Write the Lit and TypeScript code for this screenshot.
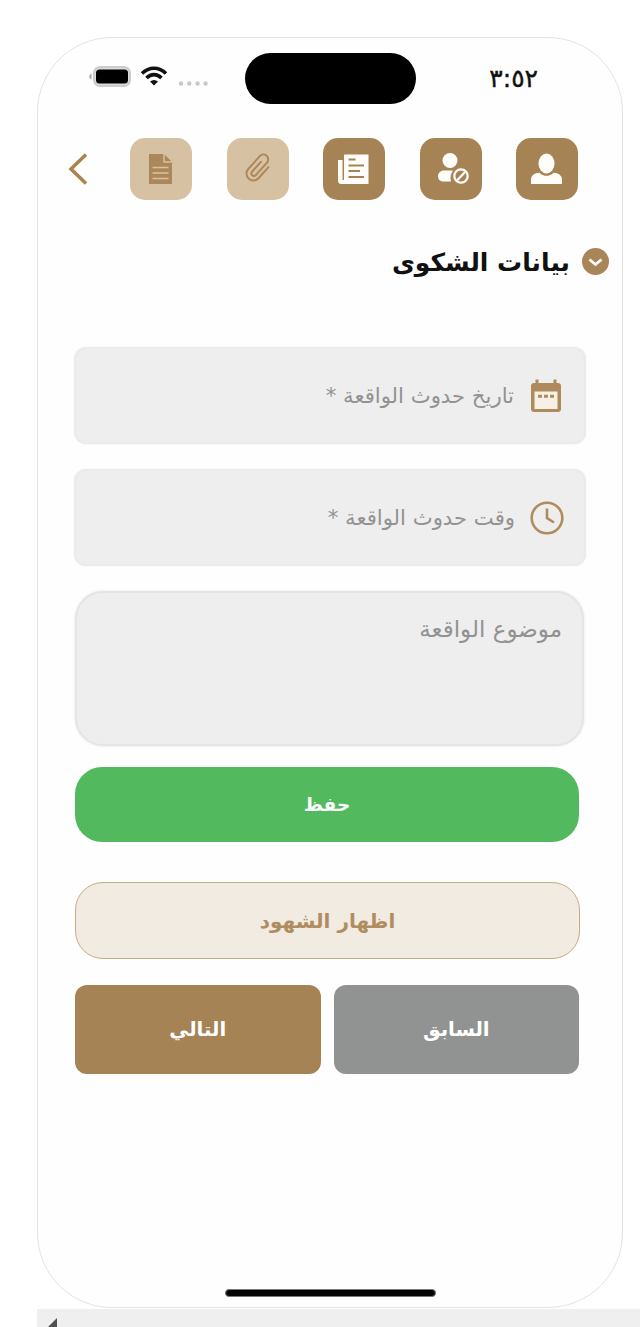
import { LitElement, html, css, svg } from "lit";
import { customElement } from "lit/decorators.js";

const person = svg`<ellipse cx="30.5" cy="25.5" rx="8" ry="10"/><path d="M15 46v-4.500c0-3.500 3-6 6.500-6.500l2-.3c4 4.200 10 4.200 14 0l2 .3c3.500.5 6.500 3 6.500 6.500V46z"/>`;

const blocked = svg`<circle cx="30" cy="22.500" r="7.500"/><path d="M31 43.500H23c-3 0-5-2.500-5-5 0-3.500 2.500-6 6-6h9c-2.500 3.500-3 7-2 11z"/><g fill="none" stroke="currentColor" stroke-width="2.300"><circle cx="41" cy="38" r="6.700"/><path d="m37 42.500 8.500-9"/></g>`;

const news = svg`<path d="M21.500 16.500h24V46H18.500a3.500 3.500 0 0 1-3.500-3.500V22h4.500v20h1.500V17.500z"/><g stroke="#a68355" stroke-width="1.800" fill="none"><path d="M25.500 21.500h7M25.500 27.500H41M25.500 33H37M25.500 39H41"/></g>`;

const clip = svg`<path transform="translate(31 30.500) rotate(42) scale(1.150)" fill="none" stroke="currentColor" stroke-width="1.700" stroke-linecap="round" d="M6-7V6A6 6 0 0 1-6 6V-9A4.200 4.200 0 0 1 2.400-9V5.500A2.200 2.200 0 0 1-2 5.500V-6"/>`;

const doc = svg`<path d="M19 16h15l8 8v22H19z"/><path d="M34 16v8h8" fill="none" stroke="#d6c1a3" stroke-width="1.500"/><path d="M22.500 29.500h16M22.500 35h16M22.500 40.500h16" stroke="#d6c1a3" stroke-width="1.300"/>`;

@customElement("app-root")
export class AppRoot extends LitElement {
  static styles = css`
    :host { display: block; width: 640px; height: 1327px; overflow: hidden; background: #fff;
      font-family: "DejaVu Sans", "Noto Sans", sans-serif; }
    * { box-sizing: border-box; }
    svg { display: block; flex: none; }
    .page { padding: 37px 0 0 37px; }
    .phone { width: 586px; height: 1271px; border: 1.500px solid #e3e3e3; border-radius: 75px;
      background: #fefefe; display: flex; flex-direction: column; }
    .status { height: 51px; margin: 15px 84px 0 51px; display: flex; align-items: center; }
    .signals { display: flex; align-items: center; width: 120px; margin-top: -3px; }
    .island { width: 171px; height: 51px; border-radius: 26px; background: #000; margin-left: 36px; }
    .time { margin-left: auto; font-size: 25px; line-height: 30px; direction: ltr; unicode-bidi: bidi-override; color: #111; -webkit-text-stroke: .4px #111; }
    .tabs { display: flex; align-items: center; margin: 34px 44px 0 29px; height: 62px; }
    .back { margin-right: 41px; }
    .tiles { display: flex; flex: 1; justify-content: space-between; }
    .tile { width: 62px; height: 62px; border-radius: 15px; background: #a68355; color: #fffdf9; }
    .tile.off { background: #d6c1a3; color: #ac875a; }
    .tile svg { fill: currentColor; }
    .heading { direction: rtl; display: flex; align-items: center; gap: 12px; height: 44px; margin: 39px 13px 0 0; }
    .heading h1 { margin: 0; padding-top: 4px; font-size: 25px; line-height: 44px; font-weight: 700; color: #111; white-space: nowrap; }
    .form { margin: 64px 36px 0 36px; display: flex; flex-direction: column; }
    .field { direction: rtl; height: 97px; border-radius: 12px; border: 2px solid #ebebeb; background: #eee; display: flex;
      align-items: center; padding: 0 22px; gap: 16px; color: #929292; font-size: 21.200px; box-shadow: 0 0 2px #eee; white-space: nowrap; }
    .field + .field { margin-top: 25px; }
    .clock { padding: 0 20px; gap: 15px; }
    .area { direction: rtl; height: 155px; margin: 25px 2px 0 1px; border-radius: 28px; border: 2px solid #e5e5e5; background: #eee;
      padding: 19px 20px 0 0; color: #929292; font-size: 23px; line-height: 34px; box-shadow: 0 0 3px #e5e5e5; }
    .btn { font-family: inherit; border: 0; padding: 0; display: flex; align-items: center; justify-content: center;
      direction: rtl; font-weight: 700; color: #fff; font-size: 19.700px; white-space: nowrap; }
    .save { height: 75px; margin: 21px 7px 0 1px; border-radius: 27px; background: #53b95e; font-size: 18.500px; }
    .show { height: 77px; margin: 40px 6px 0 1px; border-radius: 28px; border: 1.500px solid #c3ad7e; background: #f1ebe2; color: #b08d60; font-size: 20px; }
    .pair { display: flex; gap: 13px; margin: 26px 7px 0 1px; height: 89px; }
    .pair .btn { flex: 1; border-radius: 12px; }
    .next { background: #a68355; }
    .prev { background: #909391; }
    .home { width: 211px; height: 8px; border-radius: 4px; background: #050505; margin: auto auto 10px 187px; border: 1px solid #777; }
    .scroll { height: 19px; margin-top: 1px; background: #efefef; padding: 9px 0 0 11px; }
  `;

  private tile(icon: unknown, off = false) {
    return html`<div class="tile ${off ? "off" : ""}"><svg width="62" height="62" viewBox="0 0 62 62">${icon}</svg></div>`;
  }

  render() {
    return html`
      <div class="page">
        <div class="phone">
          <div class="status">
            <div class="signals">
              <svg width="120" height="30" viewBox="0 0 120 30">
                <rect x="5" y="5" width="36" height="19" rx="6" fill="#ddd" stroke="#ccc" stroke-width="2"/>
                <rect x="7" y="7.500" width="32" height="14" rx="3.500"/>
                <path d="M2.500 11.500v6c-3-1-3-5 0-6z" fill="#aaa"/>
                <g fill="none" stroke="#111" stroke-width="3.600"><path d="M53 11.500c7-7 17-7 24 0M57.500 16c4.500-4.500 10.500-4.500 15 0"/></g>
                <path d="M61 19.500c2.500-2 5.500-2 8 0L65 23.500z" fill="#111"/>
                <g fill="#c8c8c8"><circle cx="92" cy="21.500" r="2.200"/><circle cx="100.300" cy="21.500" r="2.200"/><circle cx="108.500" cy="21.500" r="2.200"/><circle cx="116.500" cy="21.500" r="2.200"/></g>
              </svg>
            </div>
            <div class="island"></div>
            <span class="time">٣:٥٢</span>
          </div>
          <div class="tabs">
            <svg class="back" width="22" height="36" viewBox="0 0 22 36"><path d="M19 3.500 4 18l15 14.500" fill="none" stroke="#aa834d" stroke-width="3.500"/></svg>
            <div class="tiles">
              ${this.tile(doc, true)}${this.tile(clip, true)}${this.tile(news)}${this.tile(blocked)}${this.tile(person)}
            </div>
          </div>
          <div class="heading">
            <svg width="27" height="27" viewBox="0 0 27 27"><circle cx="13.500" cy="13.500" r="13.500" fill="#aa8558"/><path d="m7.500 11.500 6 5 6-5" fill="none" stroke="#fff" stroke-width="2.800"/></svg>
            <h1>بيانات الشكوى</h1>
          </div>
          <div class="form">
            <div class="field">
              <svg width="32" height="36" viewBox="0 0 32 36"><path d="M4 5h24a3 3 0 0 1 3 3v23a3 3 0 0 1-3 3H4a3 3 0 0 1-3-3V8a3 3 0 0 1 3-3z" fill="#ae8a5d"/><path d="M7 1.500V7M25 1.500V7" stroke="#ae8a5d" stroke-width="3"/><path d="M4.500 13.500h23V31h-23z" fill="#f6f0e5"/><path d="M8 18.300h4M14 18.300h4M20 18.300h4" stroke="#ae8a5d" stroke-width="3"/></svg>
              <span>تاريخ حدوث الواقعة *</span>
            </div>
            <div class="field clock">
              <svg width="34" height="34" viewBox="0 0 34 34" fill="none" stroke="#b08c5b" stroke-width="2.600"><circle cx="17" cy="17" r="15.300"/><path d="M17 7.500V17l7 4.500"/></svg>
              <span>وقت حدوث الواقعة *</span>
            </div>
            <div class="area">موضوع الواقعة</div>
            <button class="btn save">حفظ</button>
            <button class="btn show">اظهار الشهود</button>
            <div class="pair">
              <button class="btn next">التالي</button>
              <button class="btn prev">السابق</button>
            </div>
          </div>
          <div class="home"></div>
        </div>
        <div class="scroll"><svg width="10" height="18" viewBox="0 0 10 18"><path d="M9 0v18L0 9z" fill="#505050"/></svg></div>
      </div>`;
  }
}
